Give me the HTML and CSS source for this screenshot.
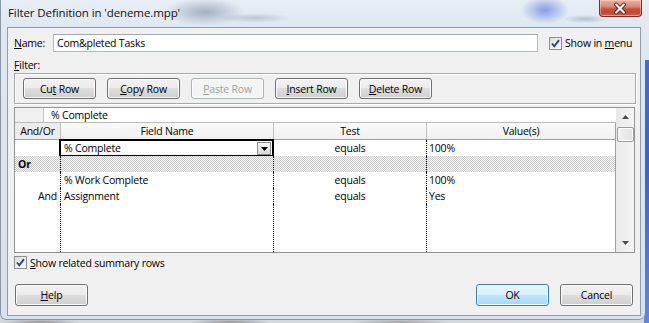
FILE: index.html
```html
<!DOCTYPE html>
<html lang="en">
<head>
    <meta charset="UTF-8">
    <meta name="viewport" content="width=device-width, initial-scale=1.0">
    <title>Filter Definition</title>
    <link rel="stylesheet" href="styles.css">
</head>
<body>
    <div class="window">
        <div class="titlebar">
            <span class="title">Filter Definition in 'deneme.mpp'</span>
            <button class="close-btn" aria-label="Close">
                <svg width="43" height="17" viewBox="0 0 43 17">
                    <path d="M17.5 4.5 L25.5 12.5 M25.5 4.5 L17.5 12.5" stroke="#5b1e16" stroke-width="4.2" stroke-linecap="round"/>
                    <path d="M17.5 4.5 L25.5 12.5 M25.5 4.5 L17.5 12.5" stroke="#ffffff" stroke-width="2.2" stroke-linecap="round"/>
                </svg>
            </button>
        </div>

        <div class="client">
            <div class="name-row">
                <label class="name-label" for="filterName"><u>N</u>ame:</label>
                <input class="name-input" id="filterName" type="text" value="Com&amp;pleted Tasks">
                <label class="check show-menu">
                    <span class="checkbox">
                        <svg width="11" height="11" viewBox="0 0 11 11"><path d="M2 5.5 L4.3 8.3 L9 2.2" fill="none" stroke="#2b3f8c" stroke-width="1.9"/></svg>
                    </span>
                    <span>Show in <u>m</u>enu</span>
                </label>
            </div>

            <div class="filter-label"><u>F</u>ilter:</div>

            <div class="toolbar">
                <button class="btn">Cu<u>t</u> Row</button>
                <button class="btn"><u>C</u>opy Row</button>
                <button class="btn" disabled><u>P</u>aste Row</button>
                <button class="btn"><u>I</u>nsert Row</button>
                <button class="btn"><u>D</u>elete Row</button>
            </div>

            <div class="grid">
                <div class="grid-main">
                    <div class="edit-bar">
                        <div class="edit-corner"></div>
                        <div class="edit-text">% Complete</div>
                    </div>
                    <div class="grid-head">
                        <div class="hcell">And/Or</div>
                        <div class="hcell">Field Name</div>
                        <div class="hcell">Test</div>
                        <div class="hcell">Value(s)</div>
                    </div>
                    <div class="grid-body">
                        <div class="row">
                            <div class="cell andor"></div>
                            <div class="cell field selected">
                                <span>% Complete</span>
                                <span class="drop-btn">
                                    <svg width="7" height="4" viewBox="0 0 7 4"><path d="M0 0 H7 L3.5 4 Z" fill="#000"/></svg>
                                </span>
                            </div>
                            <div class="cell test">equals</div>
                            <div class="cell value">100%</div>
                        </div>
                        <div class="row hatched">
                            <div class="cell andor or">Or</div>
                            <div class="cell field"></div>
                            <div class="cell test"></div>
                            <div class="cell value"></div>
                        </div>
                        <div class="row">
                            <div class="cell andor"></div>
                            <div class="cell field">% Work Complete</div>
                            <div class="cell test">equals</div>
                            <div class="cell value">100%</div>
                        </div>
                        <div class="row">
                            <div class="cell andor and">And</div>
                            <div class="cell field">Assignment</div>
                            <div class="cell test">equals</div>
                            <div class="cell value">Yes</div>
                        </div>
                        <div class="row filler">
                            <div class="cell andor"></div>
                            <div class="cell field"></div>
                            <div class="cell test"></div>
                            <div class="cell value"></div>
                        </div>
                    </div>
                </div>
                <div class="vscroll">
                    <div class="arrow">
                        <svg width="7" height="4" viewBox="0 0 7 4"><path d="M0 4 H7 L3.5 0 Z" fill="#4d4d4d"/></svg>
                    </div>
                    <div class="thumb"></div>
                    <div class="track"></div>
                    <div class="arrow">
                        <svg width="7" height="4" viewBox="0 0 7 4"><path d="M0 0 H7 L3.5 4 Z" fill="#4d4d4d"/></svg>
                    </div>
                </div>
            </div>

            <label class="check summary">
                <span class="checkbox">
                    <svg width="11" height="11" viewBox="0 0 11 11"><path d="M2 5.5 L4.3 8.3 L9 2.2" fill="none" stroke="#2b3f8c" stroke-width="1.9"/></svg>
                </span>
                <span><u>S</u>how related summary rows</span>
            </label>

            <div class="footer">
                <button class="btn help-btn"><u>H</u>elp</button>
                <button class="btn default ok-btn">OK</button>
                <button class="btn cancel-btn">Cancel</button>
            </div>
        </div>
    </div>
</body>
</html>
```

FILE: styles.css
```css
body {
    margin: 0;
    width: 649px;
    height: 323px;
    overflow: hidden;
    font-family: "Open Sans", "Noto Sans", Arial, sans-serif;
    font-size: 10.5px;
    letter-spacing: -0.2px;
    color: #000;
    background:
        linear-gradient(#e6ecf3 0, #dde5ee 60px, transparent 60px) right top / 5px 100% no-repeat,
        linear-gradient(#4a72d8, #3a62cc 50%, #5e86e4) right top / 5px 100% no-repeat,
        radial-gradient(ellipse 40px 3px at 40px 322px, rgba(90, 90, 90, 0.5), transparent),
        radial-gradient(ellipse 40px 3px at 230px 322px, rgba(90, 90, 90, 0.5), transparent),
        radial-gradient(ellipse 50px 3px at 400px 322px, rgba(90, 90, 90, 0.4), transparent),
        #d4d8dd;
}

/* Ventana */
.window {
    width: 645px;
    height: 320px;
    padding-left: 7px;
    box-sizing: border-box;
    display: flex;
    flex-direction: column;
    border-radius: 0 0 6px 6px;
    box-shadow: inset 1px 0 0 #8b97a6, inset 0 -1px 0 #8b97a6;
    background:
        radial-gradient(ellipse 40px 14px at 205px 12px, rgba(112, 128, 156, 0.55), transparent),
        radial-gradient(ellipse 36px 5px at 255px 18px, rgba(120, 130, 150, 0.35), transparent),
        radial-gradient(ellipse 24px 14px at 545px 10px, rgba(70, 105, 215, 0.6), transparent),
        radial-gradient(ellipse 22px 4px at 585px 19px, rgba(110, 125, 160, 0.4), transparent),
        linear-gradient(#e8eef5, #dfe7f0 27px, #d9e2ec);
}

.titlebar {
    height: 27px;
    display: flex;
    align-items: flex-start;
    padding-left: 1px;
}

.title {
    line-height: 26px;
    font-size: 11.5px;
    letter-spacing: -0.1px;
    color: #111;
}

.close-btn {
    margin-left: auto;
    margin-right: 3px;
    width: 43px;
    height: 17px;
    padding: 0;
    border: 1px solid #7a2f24;
    border-top: none;
    border-radius: 0 0 4px 4px;
    background: linear-gradient(#eab0a2 0, #d98a78 40%, #c8533e 55%, #c04631 80%, #d06a4e 100%);
    box-shadow: inset 0 0 0 1px rgba(255, 220, 210, 0.45);
    display: flex;
    align-items: center;
    justify-content: center;
}

.close-btn svg {
    display: block;
    margin-left: -1px;
}

.client {
    width: 634px;
    height: 289px;
    box-sizing: border-box;
    border: 1px solid #8f9cab;
    background: #f0f0f0;
    padding: 0 4px 0 6px;
}

/* Fila nombre */
.name-row {
    display: flex;
    align-items: center;
    margin-top: 6px;
    height: 18px;
}

.name-label {
    width: 39px;
}

.name-input {
    width: 485px;
    height: 18px;
    box-sizing: border-box;
    margin: 0;
    padding: 0 3px;
    border: 1px solid #b5bac1;
    border-top-color: #a2a6ad;
    font: inherit;
    letter-spacing: inherit;
    color: #000;
    background: #fff;
}

.check {
    display: flex;
    align-items: center;
    gap: 3px;
    white-space: nowrap;
}

.show-menu {
    margin-left: 11px;
}

.checkbox {
    width: 13px;
    height: 13px;
    flex: none;
    box-sizing: border-box;
    border: 1px solid #8e8f8f;
    background: linear-gradient(135deg, #dcdcdc, #fbfbfb);
    display: flex;
    align-items: center;
    justify-content: center;
}

.checkbox svg {
    display: block;
}

.filter-label {
    margin-top: 6px;
    line-height: 14px;
}

/* Barra de botones */
.toolbar {
    margin-top: 1px;
    height: 31px;
    box-sizing: border-box;
    border: 1px solid #a9a9a9;
    box-shadow: inset 1px 1px 0 #fff, 1px 1px 0 #fff;
    padding: 4px 0 0 8px;
    display: flex;
    gap: 11px;
}

.btn {
    width: 73px;
    height: 21px;
    padding: 0;
    font: inherit;
    letter-spacing: inherit;
    color: #000;
    border: 1px solid #707070;
    border-radius: 3px;
    background: linear-gradient(#f2f2f2 0, #ebebeb 50%, #dddddd 50%, #cfcfcf 100%);
    box-shadow: inset 0 0 0 1px #fbfbfb;
}

.btn:disabled {
    color: #a0a0a0;
    border-color: #adb2b5;
    background: #f4f4f4;
    box-shadow: inset 0 0 0 1px #fcfcfc;
}

/* Rejilla */
.grid {
    margin-top: 3px;
    width: 621px;
    height: 146px;
    box-sizing: border-box;
    border: 1px solid #939393;
    display: flex;
    background: #fff;
}

.grid-main {
    width: 601px;
    display: flex;
    flex-direction: column;
}

.edit-bar {
    height: 15px;
    display: flex;
    border-bottom: 1px solid #bcbcbc;
    box-sizing: border-box;
    line-height: 14px;
}

.edit-corner {
    width: 28px;
    background: #f0f0f0;
    border-right: 1px solid #c4c4c4;
}

.edit-text {
    padding-left: 7px;
}

.grid-head {
    height: 17px;
    box-sizing: border-box;
    display: grid;
    grid-template-columns: 45px 213px 153px 189px;
    border-bottom: 1px solid #a0a0a0;
    border-right: 1px solid #a0a0a0;
    background: linear-gradient(#fafafa, #f0f0f0);
}

.hcell {
    text-align: center;
    line-height: 16px;
    border-left: 1px solid #bdbdbd;
}

.hcell:first-child {
    border-left: none;
    background: #ececec;
}

.grid-body {
    flex: 1;
    display: flex;
    flex-direction: column;
    border-right: 1px solid #a0a0a0;
}

.row {
    height: 16px;
    display: grid;
    grid-template-columns: 45px 213px 153px 189px;
    line-height: 16px;
}

.row.filler {
    flex: 1;
}

.row.hatched {
    background: repeating-conic-gradient(#c9c9c9 0 25%, #f8f8f8 0 50%) 0 0 / 2px 2px;
}

.cell {
    white-space: nowrap;
    overflow: hidden;
}

.cell.field,
.cell.test,
.cell.value {
    border-left: 1px dotted #000;
}

.cell.field {
    padding-left: 3px;
}

.cell.test {
    text-align: center;
}

.cell.value {
    padding-left: 2px;
}

.cell.or {
    font-weight: 700;
    padding-left: 3px;
}

.cell.and {
    text-align: right;
    padding-right: 3px;
}

.cell.selected {
    display: flex;
    align-items: center;
    outline: 2px solid #000;
    outline-offset: -1px;
}

.drop-btn {
    margin-left: auto;
    margin-right: 2px;
    width: 14px;
    height: 13px;
    box-sizing: border-box;
    border: 1px solid #8c8c8c;
    background: linear-gradient(#f6f6f6, #d8d8d8);
    display: flex;
    align-items: center;
    justify-content: center;
}

.drop-btn svg {
    display: block;
    margin-top: 1px;
}

/* Barra de desplazamiento */
.vscroll {
    width: 18px;
    display: flex;
    flex-direction: column;
    background: linear-gradient(to right, #e9e9e9, #f5f5f5);
}

.arrow {
    height: 18px;
    display: flex;
    align-items: center;
    justify-content: center;
}

.arrow svg {
    display: block;
}

.thumb {
    height: 15px;
    margin: 1px 0 0 1px;
    box-sizing: border-box;
    border: 1px solid #9b9b9b;
    border-radius: 2px;
    background: linear-gradient(to right, #f3f3f3, #e2e2e2);
    box-shadow: inset 0 0 0 1px #fcfcfc;
}

.track {
    flex: 1;
}

/* Pie */
.summary {
    margin-top: 3px;
    height: 13px;
}

.footer {
    margin-top: 15px;
    display: flex;
}

.footer .btn {
    height: 22px;
}

.help-btn {
    margin-left: 1px;
}

.ok-btn {
    margin-left: auto;
}

.cancel-btn {
    margin-left: 11px;
    margin-right: 3px;
}

.btn.default {
    border-color: #3c7fb1;
    background: linear-gradient(#eaf6fd 0, #d9f0fc 50%, #bee6fd 50%, #a7d9f5 100%);
    box-shadow: inset 0 0 0 1px #f5fbfe;
}
```
